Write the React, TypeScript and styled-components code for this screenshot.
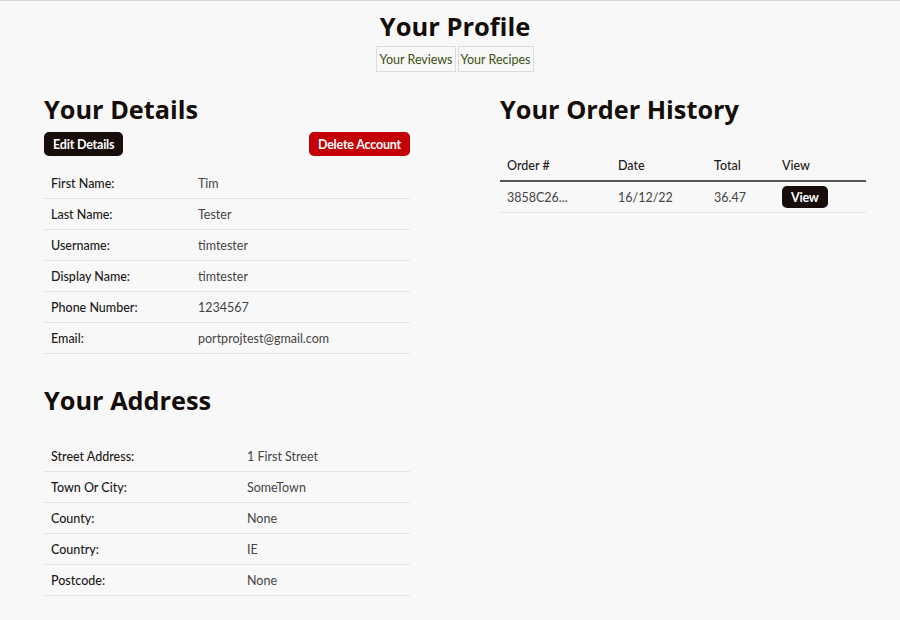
import React from "react";
import styled, { createGlobalStyle } from "styled-components";

const Global = createGlobalStyle`
  html, body { margin: 0; padding: 0; background: #f8f8f8; }
  body { font-family: "Lato", "Noto Sans", sans-serif; color: #222; }
`;

const Page = styled.div`
  border-top: 1px solid #d6d6d6;
  min-height: 619px;
  box-sizing: border-box;
  padding: 0 34px 0 44px;
`;

const Header = styled.header`
  display: flex;
  flex-direction: column;
  align-items: center;
  padding-top: 8px;
`;

const Title = styled.h1`
  margin: 0;
  font-family: "Open Sans", sans-serif;
  font-weight: 700;
  font-size: 25.5px;
  line-height: 34px;
  color: #140d0a;
`;

const Tabs = styled.div`
  display: flex;
  gap: 2px;
  margin-top: 3px;
`;

const Tab = styled.button`
  font-family: "Lato", sans-serif;
  font-size: 12.5px;
  color: #3a5010;
  background: #f8f8f8;
  border: 1px solid #dcdcdc;
  padding: 0 2px;
  height: 26px;
  cursor: pointer;
`;

const Columns = styled.div`
  display: grid;
  grid-template-columns: 366px 366px;
  column-gap: 90px;
  margin-top: 20px;
`;

const Column = styled.section`
  display: flex;
  flex-direction: column;
`;

const SectionTitle = styled.h2<{ $top?: number }>`
  margin: ${(p) => p.$top ?? 0}px 0 0;
  font-family: "Open Sans", sans-serif;
  font-weight: 700;
  font-size: 25.3px;
  line-height: 34px;
  color: #140d0a;
`;

const ActionRow = styled.div`
  display: flex;
  justify-content: space-between;
  margin-top: 6px;
`;

const Button = styled.button<{ $variant?: "dark" | "danger" }>`
  font-family: "Lato", sans-serif;
  font-weight: 700;
  font-size: 12.5px;
  letter-spacing: -0.2px;
  color: #fff;
  background: ${(p) => (p.$variant === "danger" ? "#c20006" : "#170e0c")};
  border: none;
  border-radius: 5px;
  height: 24px;
  padding: 0 9px;
  cursor: pointer;
`;

const Table = styled.div<{ $top: number }>`
  display: flex;
  flex-direction: column;
  margin-top: ${(p) => p.$top}px;
`;

const Row = styled.div<{ $cols: string; $head?: boolean }>`
  display: grid;
  grid-template-columns: ${(p) => p.$cols};
  align-items: center;
  height: 30px;
  border-bottom: ${(p) => (p.$head ? "2px solid #555" : "1px solid #e4e4e4")};
  font-size: 12.5px;
`;

const Label = styled.div`
  padding: 0 7px;
  color: #1d1a18;
  font-weight: 500;
`;

const Value = styled.div`
  padding: 0 7px;
  color: #444;
`;

const SmallButton = styled(Button)`
  height: 22px;
  padding: 0 9px;
`;

const details = [
  ["First Name:", "Tim"],
  ["Last Name:", "Tester"],
  ["Username:", "timtester"],
  ["Display Name:", "timtester"],
  ["Phone Number:", "1234567"],
  ["Email:", "portprojtest@gmail.com"],
];

const address = [
  ["Street Address:", "1 First Street"],
  ["Town Or City:", "SomeTown"],
  ["County:", "None"],
  ["Country:", "IE"],
  ["Postcode:", "None"],
];

const orderCols = "111px 96px 68px 1fr";

export default function App() {
  return (
    <>
      <Global />
      <Page>
        <Header>
          <Title>Your Profile</Title>
          <Tabs>
            <Tab>Your Reviews</Tab>
            <Tab>Your Recipes</Tab>
          </Tabs>
        </Header>
        <Columns>
          <Column>
            <SectionTitle>Your Details</SectionTitle>
            <ActionRow>
              <Button>Edit Details</Button>
              <Button $variant="danger">Delete Account</Button>
            </ActionRow>
            <Table $top={12}>
              {details.map(([k, v]) => (
                <Row key={k} $cols="147px 1fr">
                  <Label>{k}</Label>
                  <Value>{v}</Value>
                </Row>
              ))}
            </Table>
            <SectionTitle $top={29}>Your Address</SectionTitle>
            <Table $top={24}>
              {address.map(([k, v]) => (
                <Row key={k} $cols="196px 1fr">
                  <Label>{k}</Label>
                  <Value>{v}</Value>
                </Row>
              ))}
            </Table>
          </Column>
          <Column>
            <SectionTitle>Your Order History</SectionTitle>
            <Table $top={24}>
              <Row $cols={orderCols} $head>
                <Label>Order #</Label>
                <Label>Date</Label>
                <Label>Total</Label>
                <Label>View</Label>
              </Row>
              <Row $cols={orderCols}>
                <Value>3858C26...</Value>
                <Value>16/12/22</Value>
                <Value>36.47</Value>
                <Value>
                  <SmallButton>View</SmallButton>
                </Value>
              </Row>
            </Table>
          </Column>
        </Columns>
      </Page>
    </>
  );
}
